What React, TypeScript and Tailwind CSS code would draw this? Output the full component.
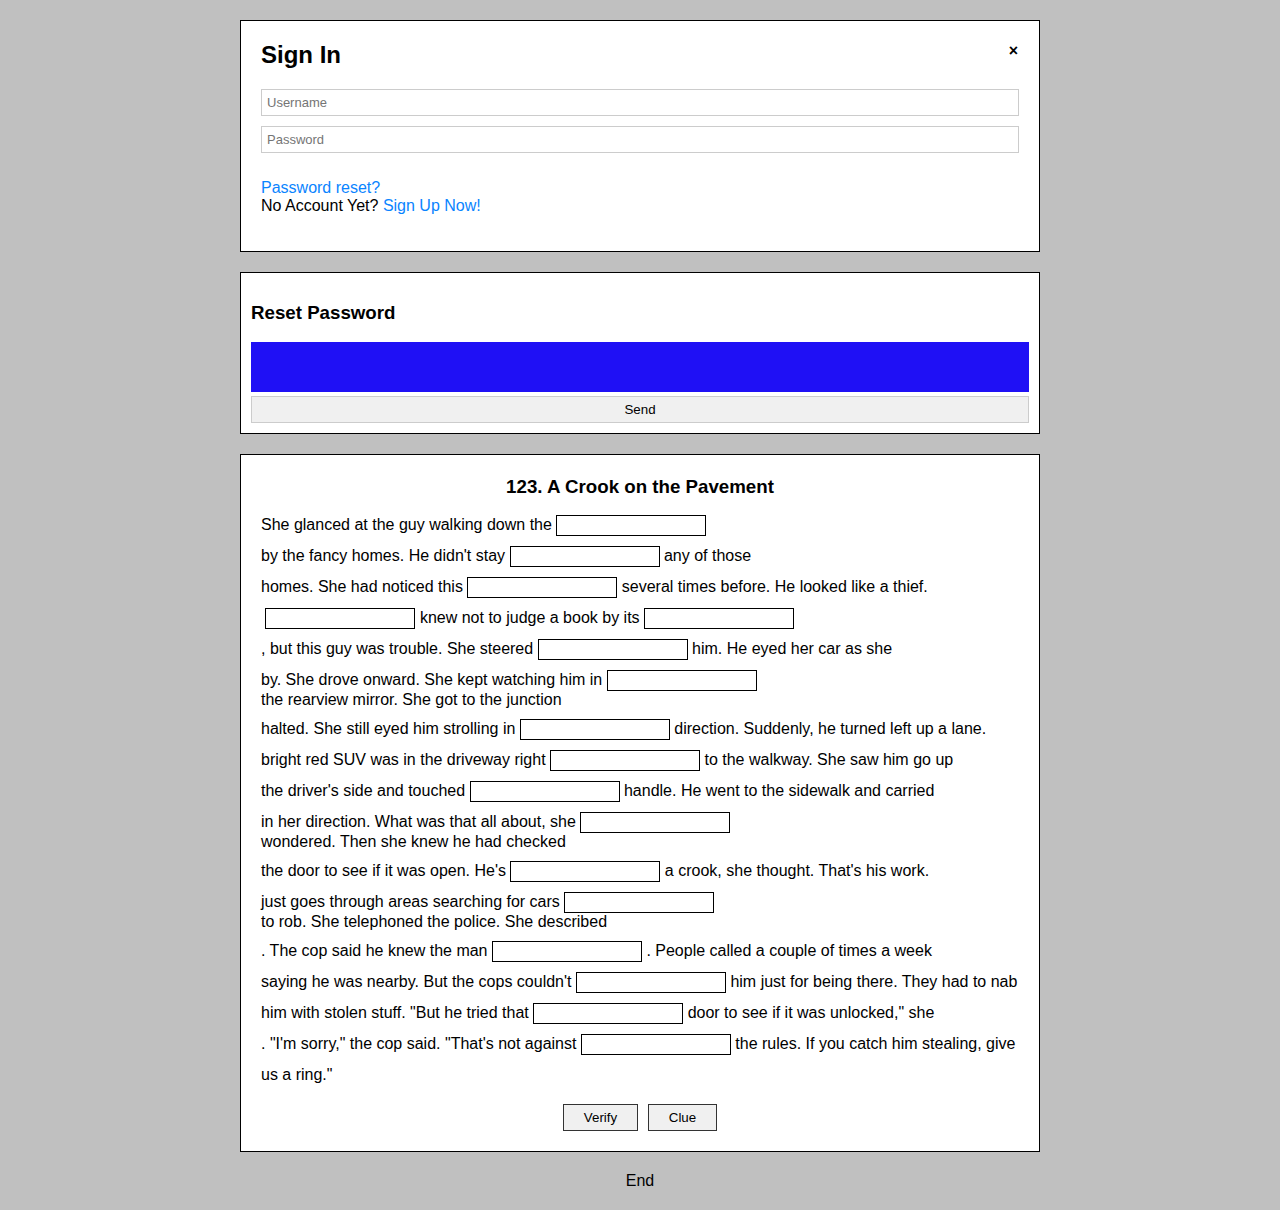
import { Fragment } from "react";

// each line of the story: text parts with a blank between them
const lines: { parts: string[]; breakAfter?: boolean[]; last?: boolean }[] = [
  { parts: ["She glanced at the guy walking down the ", ""] },
  { parts: ["by the fancy homes. He didn't stay ", " any of those"] },
  { parts: ["homes. She had noticed this ", " several times before. He looked like a thief."] },
  { parts: ["\u00a0", " knew not to judge a book by its ", ""] },
  { parts: [", but this guy was trouble. She steered ", " him. He eyed her car as she"] },
  { parts: ["by. She drove onward. She kept watching him in ", "the rearview mirror. She got to the junction"], breakAfter: [true] },
  { parts: ["halted. She still eyed him strolling in ", " direction. Suddenly, he turned left up a lane."] },
  { parts: ["bright red SUV was in the driveway right ", " to the walkway. She saw him go up"] },
  { parts: ["the driver's side and touched ", " handle. He went to the sidewalk and carried"] },
  { parts: ["in her direction. What was that all about, she ", "wondered. Then she knew he had checked"], breakAfter: [true] },
  { parts: ["the door to see if it was open. He's ", " a crook, she thought. That's his work."] },
  { parts: ["just goes through areas searching for cars ", "to rob. She telephoned the police. She described"], breakAfter: [true] },
  { parts: [". The cop said he knew the man ", " . People called a couple of times a week"] },
  { parts: ["saying he was nearby. But the cops couldn't ", " him just for being there. They had to nab"] },
  { parts: ["him with stolen stuff. \"But he tried that ", " door to see if it was unlocked,\" she"] },
  { parts: [". \"I'm sorry,\" the cop said. \"That's not against ", " the rules. If you catch him stealing, give"] },
  { parts: ["us a ring.\""], last: true },
];

function Blank() {
  return (
    <input
      type="text"
      className="inline-block h-[21px] w-[150px] border border-black bg-white px-[2px] align-baseline text-[13.33px] outline-none"
    />
  );
}

export default function App() {
  return (
    <div className="min-h-[1210px] bg-[#c0c0c0] pt-5 pb-[21px] font-['Liberation_Sans',Arial,sans-serif] leading-[normal] text-black">
      {/* Sign in */}
      <div className="mx-auto mb-5 w-[800px] border border-black bg-white px-5 pt-5 pb-[36px]">
        <div className="flex items-start justify-between">
          <h2 className="text-[24px] font-bold">Sign In</h2>
          <button className="mt-[1px] mr-[1px] text-[16px] font-bold leading-[normal]">×</button>
        </div>
        <div className="mt-5 flex flex-col gap-[10px]">
          <input
            type="text"
            placeholder="Username"
            className="h-[27px] w-full border border-[#cccccc] px-[5px] text-[13px] outline-none placeholder:text-[#757575]"
          />
          <input
            type="password"
            placeholder="Password"
            className="h-[27px] w-full border border-[#cccccc] px-[5px] text-[13px] outline-none placeholder:text-[#757575]"
          />
        </div>
        <div className="mt-[26px] text-[16px]">
          <a className="text-[#0a84ff]">Password reset?</a>
          <div>
            No Account Yet? <a className="text-[#0a84ff]">Sign Up Now!</a>
          </div>
        </div>
      </div>

      {/* Reset password */}
      <div className="mx-auto mb-5 w-[800px] border border-black bg-white p-[10px]">
        <h3 className="mt-[19px] mb-[18px] text-[18.72px] font-bold">Reset Password</h3>
        <div className="h-[50px] w-full bg-[#1f10f5]" />
        <button className="mt-1 h-[27px] w-full border border-[#cccccc] bg-[#f0f0f0] text-[13.33px]">Send</button>
      </div>

      {/* Story */}
      <div className="mx-auto w-[800px] border border-black bg-white p-5">
        <h3 className="mt-[1px] mb-[17px] text-center text-[18.72px] font-bold">123. A Crook on the Pavement</h3>
        <div className="text-[16px]">
          {lines.map((line, i) => (
            <div key={i} className={line.last ? "mb-[10px] pt-[1px]" : "mb-[10px]"}>
              {line.parts.map((p, j) => (
                <Fragment key={j}>
                  {p}
                  {j < line.parts.length - 1 && <Blank />}
                  {j < line.parts.length - 1 && line.breakAfter?.[j] && <br />}
                </Fragment>
              ))}
            </div>
          ))}
        </div>
        <div className="mt-[20px] flex justify-center gap-[10px]">
          <button className="h-[27px] w-[75px] border border-[#333333] bg-[#f0f0f0] text-[13.33px]">Verify</button>
          <button className="h-[27px] w-[69px] border border-[#333333] bg-[#f0f0f0] text-[13.33px]">Clue</button>
        </div>
      </div>

      <p className="mt-[20px] text-center text-[16px]">End</p>
    </div>
  );
}
